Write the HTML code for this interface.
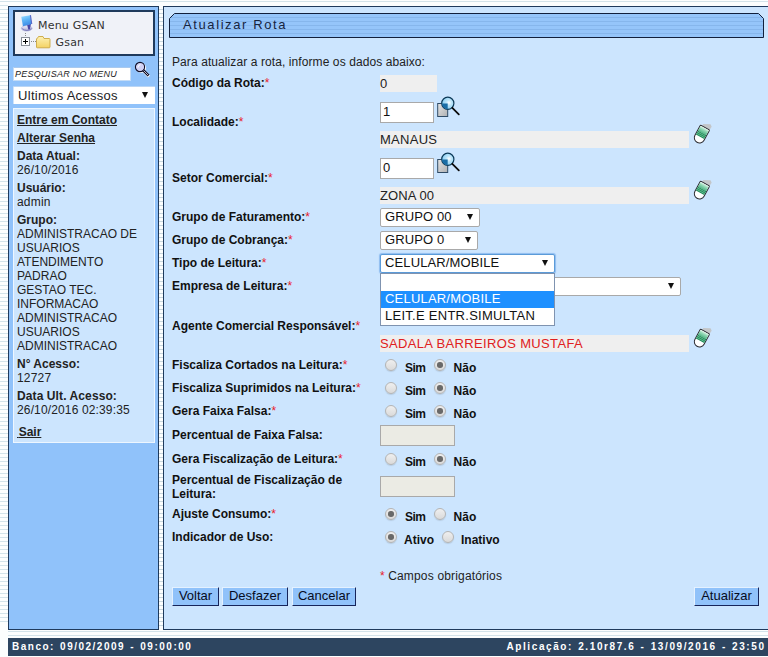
<!DOCTYPE html>
<html lang="pt-BR">
<head>
<meta charset="utf-8">
<title>Atualizar Rota</title>
<style>
*{box-sizing:border-box;margin:0;padding:0}
html,body{width:768px;height:657px;overflow:hidden;background:#fcfefe}
body{position:relative;font-family:"Liberation Sans",Arial,sans-serif;font-size:12px;color:#1a1a1a}
.abs{position:absolute}
#stripesL{left:0;top:0;width:8px;height:622px;background:repeating-linear-gradient(to bottom,#fcfefe 0,#fcfefe 1px,#d3e3ea 1px,#d3e3ea 2px,#fcfefe 2px,#fcfefe 4px)}
#topline{left:0;top:1px;width:768px;height:1px;background:#d3e3ea}
#gap{left:159px;top:6px;width:4px;height:623px;background:repeating-linear-gradient(to bottom,#fcfefe 0,#fcfefe 3px,#c8d8e0 3px,#c8d8e0 4px)}
#left{left:8px;top:6px;width:151px;height:624px;background:#90c2fa;border:1px solid #1f3a5c}
#right{left:163px;top:6px;width:620px;height:624px;background:#cce5fe;border:1px solid #1f3a5c}
#bl1{left:8px;top:631px;width:760px;height:1px;background:#d3e3ea}
#bl2{left:8px;top:635px;width:760px;height:1px;background:#d3e3ea}
#footer{left:8px;top:638px;width:760px;height:18px;background:#2d4560;color:#fff;font-weight:bold;font-size:10px;letter-spacing:1.5px;line-height:18px}
#menubox{left:13px;top:10px;width:142px;height:46px;border:2px solid #1f3a5c;background:#f0f2f8}
.tree{font-family:"DejaVu Sans","Liberation Sans",sans-serif;font-size:11px;color:#333;white-space:nowrap}
#search{left:13px;top:67px;width:118px;height:14px;background:#fff;border:1px solid #c4dcf6;border-top-color:#a9c9ee;font-style:italic;font-size:9px;line-height:12px;color:#222;padding-left:1px;letter-spacing:.27px;white-space:nowrap}
#ultimos{left:13px;top:86px;width:142px;height:18px;overflow:hidden;background:#fff;box-shadow:inset 0 1px 0 #b9d5f5,inset 1px 0 0 #cfe3fa;font-size:13px;line-height:20px;padding-left:5px;letter-spacing:.3px;white-space:nowrap;color:#222}
#info{left:13px;top:108px;width:142px;height:335px;background:#cce5fe;border:1px solid #edf6ff}
.it{position:absolute;left:17px;white-space:nowrap;line-height:14px;height:14px;color:#222}
.b{font-weight:bold}
.u{text-decoration:underline}
.lbl{position:absolute;left:172px;font-weight:bold;white-space:nowrap;line-height:14px;color:#111}
.red{color:#e8202a;font-weight:normal}
.ro{position:absolute;left:380px;height:17px;background:#efefef;line-height:17px;padding-left:0;letter-spacing:.1px;font-size:13px;white-space:nowrap;color:#222}
.inp{position:absolute;left:380px;background:#fff;border:1px solid #a9a9a9;line-height:18px;padding-left:2px;color:#111;font-size:13px}
.dis{position:absolute;left:380px;width:75px;height:21px;background:#ebebe4;border:1px solid #a9a9a9}
.sel{position:absolute;left:380px;height:19px;background:#fff;border:1px solid #a9a9a9;border-radius:2px;line-height:16px;padding-left:4px;letter-spacing:.12px;white-space:nowrap;color:#111;font-size:13px}
.arr{position:absolute;width:0;height:0;border-left:3px solid transparent;border-right:3px solid transparent;border-top:6px solid #111}
.radio{position:absolute;width:12px;height:12px;border-radius:50%;border:1px solid #b4b4b4;background:linear-gradient(#efefef,#dadada);box-shadow:0 1px 1px rgba(120,130,140,.25)}
.radio.on::after{content:"";position:absolute;left:2.2px;top:2.2px;width:5.6px;height:5.6px;border-radius:50%;background:#696969}
.rl{position:absolute;font-weight:bold;white-space:nowrap;line-height:14px;color:#111}
.btn{position:absolute;top:587px;height:19px;background:#90c2fa;border:1px solid;border-color:#e4f1ff #16245a #16245a #e4f1ff;font-size:13px;line-height:16px;text-align:center;white-space:nowrap;color:#060b22}
</style>
</head>
<body>
<div class="abs" id="stripesL"></div>
<div class="abs" id="topline"></div>
<div class="abs" id="left"></div>
<div class="abs" id="gap"></div>
<div class="abs" id="right"></div>
<div class="abs" id="bl1"></div>
<div class="abs" id="bl2"></div>
<div class="abs" id="footer"><span class="abs" style="left:4px;word-spacing:.9px;white-space:nowrap">Banco: 09/02/2009 - 09:00:00</span><span class="abs" style="right:2.4px;letter-spacing:1.6px;word-spacing:.8px;white-space:nowrap">Aplicação: 2.10r87.6 - 13/09/2016 - 23:50</span></div>

<!-- LEFT PANEL -->
<div class="abs" id="menubox"></div>
<div class="abs tree" style="left:38px;top:18.5px;letter-spacing:.2px">Menu GSAN</div>
<div class="abs tree" style="left:55.5px;top:36px;letter-spacing:.2px">Gsan</div>
<div class="abs" id="search">PESQUISAR NO MENU</div>
<div class="abs" id="ultimos">Ultimos Acessos</div>
<div class="arr" style="left:142px;top:92px"></div>
<div class="abs" id="info"></div>
<div class="it b u" style="top:113px">Entre em Contato</div>
<div class="it b u" style="top:131px">Alterar Senha</div>
<div class="it b" style="top:149px">Data Atual:</div>
<div class="it" style="top:163px;letter-spacing:.14px">26/10/2016</div>
<div class="it b" style="top:181px">Usuário:</div>
<div class="it" style="top:195px;letter-spacing:.2px">admin</div>
<div class="it b" style="top:213px">Grupo:</div>
<div class="it" style="top:227px">ADMINISTRACAO DE</div>
<div class="it" style="top:241px">USUARIOS</div>
<div class="it" style="top:255px">ATENDIMENTO</div>
<div class="it" style="top:269px">PADRAO</div>
<div class="it" style="top:283px">GESTAO TEC.</div>
<div class="it" style="top:297px">INFORMACAO</div>
<div class="it" style="top:311px">ADMINISTRACAO</div>
<div class="it" style="top:325px">USUARIOS</div>
<div class="it" style="top:339px">ADMINISTRACAO</div>
<div class="it b" style="top:357px">N° Acesso:</div>
<div class="it" style="top:371px;letter-spacing:.2px">12727</div>
<div class="it b" style="top:389px;letter-spacing:.1px">Data Ult. Acesso:</div>
<div class="it" style="top:403px;letter-spacing:.14px">26/10/2016 02:39:35</div>
<div class="it b u" style="top:425px;white-space:pre"><span style="letter-spacing:-1.7px"> </span>Sair</div>


<!-- icons -->
<svg class="abs" style="left:19px;top:13px" width="16" height="20" viewBox="0 0 16 20">
<defs><linearGradient id="mon" x1="0" y1="0" x2=".3" y2="1"><stop offset="0" stop-color="#9fe0ff"/><stop offset=".5" stop-color="#5db4f6"/><stop offset="1" stop-color="#3d8be6"/></linearGradient>
<linearGradient id="bas" x1="0" y1="0" x2="0" y2="1"><stop offset="0" stop-color="#f2f2fb"/><stop offset="1" stop-color="#a9a9d6"/></linearGradient></defs>
<ellipse cx="7.7" cy="15.3" rx="5.4" ry="2.7" fill="url(#bas)" stroke="#9a9ace" stroke-width=".5"/>
<path d="M3.2 15.6 Q7.7 19.2 12.6 15.6" stroke="#6c6cb0" stroke-width=".8" fill="none"/>
<path d="M8.2 12 L12 10.6 L11 16.3 L9.3 16.6 Z" fill="#4846a6"/>
<path d="M2.3 3.8 L11.4 2.2 L12.7 11 L3.9 13.2 Z" fill="url(#mon)"/>
<path d="M11.4 2.2 L12.7 11" stroke="#5a6ac8" stroke-width="1.2" fill="none"/>
</svg>
<svg class="abs" style="left:20px;top:32px" width="32" height="18" viewBox="0 0 32 18">
<defs><linearGradient id="fol" x1="0" y1="0" x2="0" y2="1"><stop offset="0" stop-color="#fdf1b4"/><stop offset="1" stop-color="#f4d263"/></linearGradient></defs>
<rect x="5" y="1" width="1" height="1" fill="#888"/><rect x="5" y="3" width="1" height="1" fill="#888"/>
<rect x="1.5" y="5.5" width="8" height="8" fill="#fff" stroke="#8a8f98"/>
<rect x="3" y="9" width="5" height="1" fill="#000"/><rect x="5" y="7" width="1" height="5" fill="#000"/>
<rect x="11" y="9" width="1" height="1" fill="#888"/><rect x="13" y="9" width="1" height="1" fill="#888"/><rect x="15" y="9" width="1" height="1" fill="#888"/>
<path d="M16.5 7 V15 Q16.5 15.8 17.3 15.8 H29.2 Q30 15.8 30 15 V7.4 Q30 6.5 29.2 6.5 H24 L23 4.5 H18.5 L17.4 6.3 Q16.5 6.4 16.5 7 Z" fill="url(#fol)" stroke="#c9a640" stroke-width=".9"/>
</svg>
<svg class="abs" style="left:133px;top:60px" width="18" height="18" viewBox="0 0 18 18">
<circle cx="8" cy="8" r="5" fill="#fff"/>
<path d="M10.3 10.8 L16 16.5" stroke="#fff" stroke-width="3"/>
<circle cx="7" cy="7" r="4.6" fill="#d2d2f5" stroke="#10102a" stroke-width="1.1"/>
<path d="M5 7.5 Q5 5 7.5 4.7" stroke="#fff" stroke-width="1" fill="none"/>
<path d="M10 10 L15.6 15.6" stroke="#10102a" stroke-width="2.6"/>
<path d="M10.6 10.6 L15.2 15.2" stroke="#e8e8f8" stroke-width=".8"/>
</svg>
<svg class="abs" style="left:436px;top:94px" width="26" height="24" viewBox="0 0 26 24">
<defs><linearGradient id="dg1" x1="0" y1="0" x2="1" y2="1"><stop offset="0" stop-color="#e6e6e6"/><stop offset="1" stop-color="#aeb0b2"/></linearGradient>
<radialGradient id="lg1" cx=".6" cy=".45" r=".6"><stop offset="0" stop-color="#ffffff"/><stop offset=".35" stop-color="#bfe6fa"/><stop offset="1" stop-color="#86cdf2"/></radialGradient></defs>
<rect x="1.7" y="9.5" width="10" height="13" fill="url(#dg1)" stroke="#2f4b66" stroke-width="1"/>
<circle cx="11.8" cy="9.3" r="6.1" fill="url(#lg1)" stroke="#0c3a58" stroke-width="1.2"/>
<path d="M5.9 9.5 H11.7 V15.3 A6.1 6.1 0 0 1 5.9 9.5 Z" fill="#1b6ea6"/>
<path d="M16.3 13.8 L22.8 20.3" stroke="#0a0a0a" stroke-width="1.8" stroke-linecap="round"/>
</svg>
<svg class="abs" style="left:436px;top:150px" width="26" height="24" viewBox="0 0 26 24">
<defs><linearGradient id="dg2" x1="0" y1="0" x2="1" y2="1"><stop offset="0" stop-color="#e6e6e6"/><stop offset="1" stop-color="#aeb0b2"/></linearGradient>
<radialGradient id="lg2" cx=".6" cy=".45" r=".6"><stop offset="0" stop-color="#ffffff"/><stop offset=".35" stop-color="#bfe6fa"/><stop offset="1" stop-color="#86cdf2"/></radialGradient></defs>
<rect x="1.7" y="9.5" width="10" height="13" fill="url(#dg2)" stroke="#2f4b66" stroke-width="1"/>
<circle cx="11.8" cy="9.3" r="6.1" fill="url(#lg2)" stroke="#0c3a58" stroke-width="1.2"/>
<path d="M5.9 9.5 H11.7 V15.3 A6.1 6.1 0 0 1 5.9 9.5 Z" fill="#1b6ea6"/>
<path d="M16.3 13.8 L22.8 20.3" stroke="#0a0a0a" stroke-width="1.8" stroke-linecap="round"/>
</svg>
<svg class="abs" style="left:689px;top:120.1px" width="24" height="27" viewBox="0 -3 24 27">
<defs><linearGradient id="eg1" x1="0" y1="0" x2="0" y2="1"><stop offset="0" stop-color="#e2f6ec"/><stop offset=".35" stop-color="#9bdcbb"/><stop offset="1" stop-color="#4fb585"/></linearGradient></defs>
<g transform="rotate(28.8 12 12)">
<path d="M8.5 3.4 L8.7 1.2 L15.2 -1.9 L17.4 -.4 L17 3.6 Z" fill="#c3c6c9"/>
<path d="M6.8 4.4 Q6.8 3.6 7.6 3.6 H16.4 Q17.2 3.6 17.2 4.4 V15.1 A5.2 5.2 0 0 1 6.8 15.1 Z" fill="#fff" stroke="#2a2a30" stroke-width="1"/>
<path d="M7.3 4.1 H16.7 V9.8 H7.3 Z" fill="url(#eg1)"/>
<path d="M7.3 9.6 H16.7 V14 H7.3 Z" fill="#1d8a57"/>
<path d="M7.3 11 H16.7 M7.3 12.6 H16.7" stroke="#86d0ab" stroke-width=".6"/>
</g>
</svg>
<svg class="abs" style="left:689px;top:176.1px" width="24" height="27" viewBox="0 -3 24 27">
<defs><linearGradient id="eg2" x1="0" y1="0" x2="0" y2="1"><stop offset="0" stop-color="#e2f6ec"/><stop offset=".35" stop-color="#9bdcbb"/><stop offset="1" stop-color="#4fb585"/></linearGradient></defs>
<g transform="rotate(28.8 12 12)">
<path d="M8.5 3.4 L8.7 1.2 L15.2 -1.9 L17.4 -.4 L17 3.6 Z" fill="#c3c6c9"/>
<path d="M6.8 4.4 Q6.8 3.6 7.6 3.6 H16.4 Q17.2 3.6 17.2 4.4 V15.1 A5.2 5.2 0 0 1 6.8 15.1 Z" fill="#fff" stroke="#2a2a30" stroke-width="1"/>
<path d="M7.3 4.1 H16.7 V9.8 H7.3 Z" fill="url(#eg2)"/>
<path d="M7.3 9.6 H16.7 V14 H7.3 Z" fill="#1d8a57"/>
<path d="M7.3 11 H16.7 M7.3 12.6 H16.7" stroke="#86d0ab" stroke-width=".6"/>
</g>
</svg>
<svg class="abs" style="left:689px;top:324.1px" width="24" height="27" viewBox="0 -3 24 27">
<defs><linearGradient id="eg3" x1="0" y1="0" x2="0" y2="1"><stop offset="0" stop-color="#e2f6ec"/><stop offset=".35" stop-color="#9bdcbb"/><stop offset="1" stop-color="#4fb585"/></linearGradient></defs>
<g transform="rotate(28.8 12 12)">
<path d="M8.5 3.4 L8.7 1.2 L15.2 -1.9 L17.4 -.4 L17 3.6 Z" fill="#c3c6c9"/>
<path d="M6.8 4.4 Q6.8 3.6 7.6 3.6 H16.4 Q17.2 3.6 17.2 4.4 V15.1 A5.2 5.2 0 0 1 6.8 15.1 Z" fill="#fff" stroke="#2a2a30" stroke-width="1"/>
<path d="M7.3 4.1 H16.7 V9.8 H7.3 Z" fill="url(#eg3)"/>
<path d="M7.3 9.6 H16.7 V14 H7.3 Z" fill="#1d8a57"/>
<path d="M7.3 11 H16.7 M7.3 12.6 H16.7" stroke="#86d0ab" stroke-width=".6"/>
</g>
</svg>

<!-- RIGHT PANEL -->
<div class="abs" id="titlebar" style="left:169px;top:13px;width:595px;height:25px">
<svg width="595" height="25" viewBox="0 0 595 25" style="position:absolute;left:0;top:0">
<defs><pattern id="ts" width="4" height="4" patternUnits="userSpaceOnUse"><rect width="4" height="4" fill="#95c5fa"/><rect y="0" width="4" height="1" fill="#86b6ec"/></pattern></defs>
<path d="M5.5 .5 H589.5 L594.5 5.5 V24.5 H.5 V5.5 Z" fill="url(#ts)" stroke="#12203c" stroke-width="1"/>
</svg>
<div class="abs" style="left:14px;top:4px;font-size:13px;letter-spacing:1.6px;line-height:16px;color:#16243e;white-space:nowrap">Atualizar Rota</div>
</div>

<div class="abs" style="left:172px;top:55px;line-height:14px;letter-spacing:.09px;white-space:nowrap;color:#222">Para atualizar a rota, informe os dados abaixo:</div>

<div class="lbl" style="top:76px">Código da Rota:<span class="red">*</span></div>
<div class="ro" style="top:75px;width:57px">0</div>

<div class="lbl" style="top:114.5px">Localidade:<span class="red">*</span></div>
<div class="inp" style="top:102px;width:54px;height:21px">1</div>
<div class="ro" style="top:131px;width:309px;letter-spacing:.27px">MANAUS</div>

<div class="lbl" style="top:171px">Setor Comercial:<span class="red">*</span></div>
<div class="inp" style="top:158px;width:54px;height:21px">0</div>
<div class="ro" style="top:187px;width:309px">ZONA 00</div>

<div class="lbl" style="top:210px">Grupo de Faturamento:<span class="red">*</span></div>
<div class="sel" style="top:208px;width:100px">GRUPO 00</div><div class="arr" style="left:467px;top:214px"></div>

<div class="lbl" style="top:233px">Grupo de Cobrança:<span class="red">*</span></div>
<div class="sel" style="top:231px;width:98px">GRUPO 0</div><div class="arr" style="left:465px;top:237px"></div>

<div class="lbl" style="top:256px">Tipo de Leitura:<span class="red">*</span></div>
<div class="lbl" style="top:278.5px">Empresa de Leitura:<span class="red">*</span></div>
<div class="sel" style="top:277px;width:301px"></div><div class="arr" style="left:668px;top:283px"></div>
<div class="sel" style="top:254px;width:175px;border-color:#5b9bd8;box-shadow:0 0 1px 1px #8ebcf0">CELULAR/MOBILE</div><div class="arr" style="left:542px;top:260px"></div>

<div class="abs" style="left:380px;top:273px;width:175px;height:53px;background:#fff;border:1px solid #7f93b0"></div>
<div class="abs" style="left:381px;top:291px;width:173px;height:17px;background:#1e90ff;color:#fff;font-size:13px;letter-spacing:.2px;line-height:15px;padding-left:4px;white-space:nowrap">CELULAR/MOBILE</div>
<div class="abs" style="left:381px;top:308px;width:173px;height:17px;font-size:13px;letter-spacing:.27px;line-height:15px;padding-left:4px;white-space:nowrap;color:#111">LEIT.E ENTR.SIMULTAN</div>

<div class="lbl" style="top:318.5px">Agente Comercial Responsável:<span class="red">*</span></div>
<div class="ro" style="top:335px;width:309px;color:#e02020;letter-spacing:.34px">SADALA BARREIROS MUSTAFA</div>

<div class="lbl" style="top:357.5px">Fiscaliza Cortados na Leitura:<span class="red">*</span></div>
<div class="lbl" style="top:381px">Fiscaliza Suprimidos na Leitura:<span class="red">*</span></div>
<div class="lbl" style="top:403.5px">Gera Faixa Falsa:<span class="red">*</span></div>
<div class="lbl" style="top:427.6px">Percentual de Faixa Falsa:</div>
<div class="dis" style="top:425px"></div>
<div class="lbl" style="top:451.5px">Gera Fiscalização de Leitura:<span class="red">*</span></div>
<div class="lbl" style="top:472.75px">Percentual de Fiscalização de<br>Leitura:</div>
<div class="dis" style="top:476px"></div>
<div class="lbl" style="top:507px">Ajuste Consumo:<span class="red">*</span></div>
<div class="lbl" style="top:529.5px">Indicador de Uso:</div>


<!-- radios -->
<div class="radio" style="left:385px;top:359px"></div><div class="rl" style="left:405px;top:361.25px;letter-spacing:-.5px">Sim</div><div class="radio on" style="left:434px;top:359px"></div><div class="rl" style="left:453.6px;top:361.25px">Não</div>
<div class="radio" style="left:385px;top:382px"></div><div class="rl" style="left:405px;top:383.5px;letter-spacing:-.5px">Sim</div><div class="radio on" style="left:434px;top:382px"></div><div class="rl" style="left:453.6px;top:383.5px">Não</div>
<div class="radio" style="left:385px;top:405px"></div><div class="rl" style="left:405px;top:406.5px;letter-spacing:-.5px">Sim</div><div class="radio on" style="left:434px;top:405px"></div><div class="rl" style="left:453.6px;top:406.5px">Não</div>
<div class="radio" style="left:385px;top:453px"></div><div class="rl" style="left:405px;top:454.5px;letter-spacing:-.5px">Sim</div><div class="radio on" style="left:434px;top:453px"></div><div class="rl" style="left:453.6px;top:454.5px">Não</div>
<div class="radio on" style="left:385px;top:508px"></div><div class="rl" style="left:405px;top:509.5px;letter-spacing:-.5px">Sim</div><div class="radio" style="left:434px;top:508px"></div><div class="rl" style="left:453.6px;top:509.5px">Não</div>
<div class="radio on" style="left:385px;top:531px"></div><div class="rl" style="left:404px;top:533.25px">Ativo</div><div class="radio" style="left:442px;top:531px"></div><div class="rl" style="left:461px;top:533.25px">Inativo</div>

<div class="abs" style="left:380px;top:569px;line-height:14px;white-space:nowrap;color:#222"><span class="red">*</span><span style="letter-spacing:.17px"> Campos obrigatórios</span></div>

<div class="btn" style="left:172px;width:47px">Voltar</div>
<div class="btn" style="left:222px;width:66px">Desfazer</div>
<div class="btn" style="left:292px;width:64px">Cancelar</div>
<div class="btn" style="left:694px;width:65px">Atualizar</div>
</body>
</html>
